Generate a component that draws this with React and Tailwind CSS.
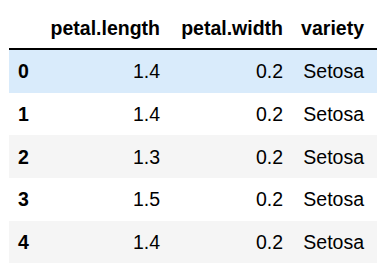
const ROWS = [
  { idx: '0', length: '1.4', width: '0.2', variety: 'Setosa' },
  { idx: '1', length: '1.4', width: '0.2', variety: 'Setosa' },
  { idx: '2', length: '1.3', width: '0.2', variety: 'Setosa' },
  { idx: '3', length: '1.5', width: '0.2', variety: 'Setosa' },
  { idx: '4', length: '1.4', width: '0.2', variety: 'Setosa' },
]

function rowBg(i) {
  if (i === 0) return 'bg-[#d9ebfb]'
  return i % 2 === 0 ? 'bg-[#f5f5f5]' : 'bg-white'
}

export default function App() {
  return (
    <div className="w-[387px] h-[279px] bg-white pl-[9px] pt-[8px] font-['Liberation_Sans',Arial,sans-serif] text-[19.5px] text-black leading-[22.4px]">
      <div className="w-[368px]">
        {/* Header */}
        <div className="flex items-center h-[42px] font-bold border-b-2 border-black">
          <div className="w-[31px]" />
          <div className="w-[129px] pr-[9px] text-right">petal.length</div>
          <div className="w-[124px] pr-[10px] text-right">petal.width</div>
          <div className="w-[84px] pr-[13px] text-right">variety</div>
        </div>

        {/* Rows */}
        {ROWS.map((row, i) => (
          <div key={row.idx} className={`flex items-center h-[42.7px] ${rowBg(i)}`}>
            <div className="w-[31px] pl-[9px] font-bold">{row.idx}</div>
            <div className="w-[129px] pr-[9px] text-right">{row.length}</div>
            <div className="w-[124px] pr-[10px] text-right">{row.width}</div>
            <div className="w-[84px] pr-[13px] text-right">{row.variety}</div>
          </div>
        ))}
      </div>
    </div>
  )
}
